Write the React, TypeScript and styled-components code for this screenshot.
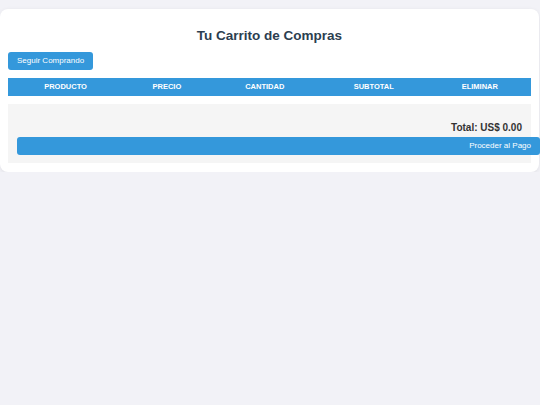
import React from 'react'
import styled, { createGlobalStyle } from 'styled-components'

const GlobalStyle = createGlobalStyle`
  html, body {
    margin: 0;
    padding: 0;
    background: #f2f2f7;
    font-family: 'Liberation Sans', Arial, sans-serif;
  }
`

const Page = styled.div`
  padding-top: 9px;
`

const Card = styled.div`
  background: #ffffff;
  border-radius: 8px;
  box-shadow: 0 1px 4px rgba(0, 0, 0, 0.08);
  width: 539px;
  box-sizing: border-box;
  padding: 17px 8px 9px 8px;
`

const Title = styled.h2`
  margin: 0 0 3px 0;
  text-align: center;
  font-size: 13.5px;
  font-weight: 700;
  color: #2c3e50;
  line-height: 20px;
`

const BackButton = styled.button`
  background: #3498db;
  color: #ffffff;
  border: none;
  border-radius: 3px;
  font-family: inherit;
  font-size: 8px;
  height: 18px;
  padding: 0 9px;
  cursor: pointer;
`

const Table = styled.table`
  width: 100%;
  border-collapse: collapse;
  margin-top: 8px;
`

const HeadCell = styled.th`
  background: #3498db;
  color: #ffffff;
  font-size: 7.5px;
  font-weight: 700;
  text-transform: uppercase;
  height: 18px;
  padding: 0 8px;
  text-align: center;
`

const Summary = styled.div`
  margin-top: 8px;
  background: #f5f5f5;
  padding: 18px 9px 8px 9px;
  display: flex;
  flex-direction: column;
`

const Total = styled.div`
  text-align: right;
  font-size: 10px;
  font-weight: 700;
  color: #333333;
  margin-bottom: 4px;
`

const PayButton = styled.button`
  box-sizing: content-box;
  width: 100%;
  height: 18px;
  padding: 0 9px;
  background: #3498db;
  color: #ffffff;
  border: none;
  border-radius: 3px;
  font-family: inherit;
  font-size: 8px;
  text-align: right;
  cursor: pointer;
`

const columns = ['Producto', 'Precio', 'Cantidad', 'Subtotal', 'Eliminar']

const App: React.FC = () => {
  return (
    <>
      <GlobalStyle />
      <Page>
        <Card>
          <Title>Tu Carrito de Compras</Title>
          <BackButton>Seguir Comprando</BackButton>
          <Table>
            <thead>
              <tr>
                {columns.map((c) => (
                  <HeadCell key={c}>{c}</HeadCell>
                ))}
              </tr>
            </thead>
            <tbody />
          </Table>
          <Summary>
            <Total>Total: US$ 0.00</Total>
            <PayButton>Proceder al Pago</PayButton>
          </Summary>
        </Card>
      </Page>
    </>
  )
}

export default App
